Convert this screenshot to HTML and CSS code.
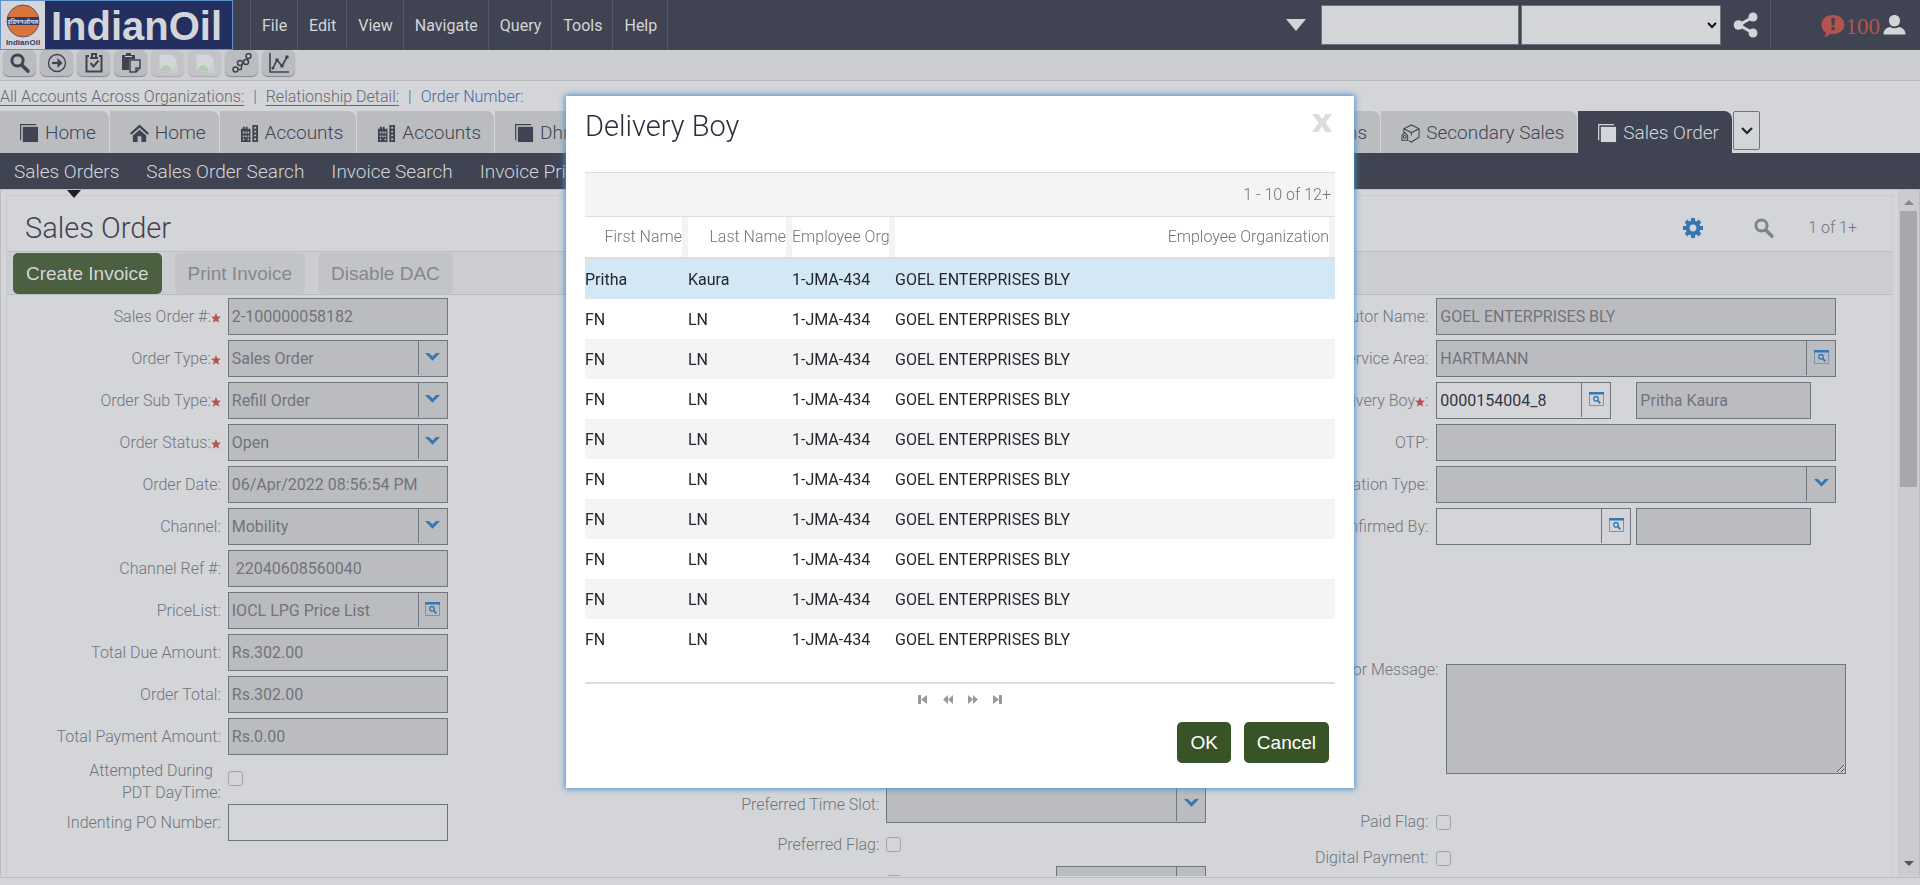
FILE: index.html
```html
<!DOCTYPE html>
<html lang="en">
<head>
<meta charset="utf-8">
<title>Sales Order</title>
<link rel="stylesheet" href="styles.css">
</head>
<body>
<svg class="sprite" aria-hidden="true">
  <symbol id="i-star" viewBox="0 0 10 10"><path fill="#b5534c" d="M5 0l1.400 3.400 3.600.3-2.800 2.400.9 3.700L5 7.800 1.900 9.800l.9-3.700L0 3.700l3.600-.3z"/></symbol>
  <symbol id="i-chev" viewBox="0 0 15 9"><path fill="#3577b3" d="M0 1h4l3.500 3.400L11 1h4L7.500 8.800z"/></symbol>
  <symbol id="i-pick" viewBox="0 0 15 14"><path fill="none" stroke="#6f96c2" d="M.5 1v12.500h14V1"/><path fill="#3577b3" d="M0 0h15v2.500H0z"/><circle cx="7" cy="6.800" r="2.300" fill="none" stroke="#3577b3" stroke-width="1.300"/><path stroke="#3577b3" stroke-width="1.800" d="M8.700 8.600l2.600 2.800"/></symbol>
  <symbol id="i-search" viewBox="0 0 20 20"><circle cx="7.500" cy="7.500" r="5.600" fill="none" stroke="currentColor" stroke-width="3"/><path stroke="currentColor" stroke-width="3.600" stroke-linecap="round" d="M12 12.200l5.800 5.900"/></symbol>
  <symbol id="i-stack" viewBox="0 0 20 20"><path fill="currentColor" d="M3 3h16v16H3z"/><path fill="none" stroke="currentColor" stroke-width="1.300" d="M.7 17V.7H17"/></symbol>
  <symbol id="i-home" viewBox="0 0 20 20"><path fill="currentColor" d="M10 6l7 6v7h-5v-6H8v6H3v-7z"/><path fill="none" stroke="currentColor" stroke-width="2.400" d="M.8 10.500L10 2.200l9.200 8.300"/></symbol>
  <symbol id="i-build" viewBox="0 0 20 20"><path fill="currentColor" fill-rule="evenodd" d="M1 5h2V3h2v2h1V3h2v2h3v14H1zM3 8v2h1.500V8zm2.500 0v2H7V8zM8 8v2h1.500V8zM3 12v2h1.500v-2zm2.500 0v2H7v-2zM8 12v2h1.500v-2zM3 15.500v1.500h1.500v-1.500zm5 0v1.500h1.500v-1.500zM13 1h6v18h-6zm2 2v2h2V3zm0 4v2h2V7zm0 4v2h2v-2zm0 4v2h2v-2z"/></symbol>
</svg>

<header class="top">
  <div class="logo">
    <svg class="logo-mark" viewBox="0 0 44 48" aria-hidden="true">
      <circle cx="22" cy="20" r="16" fill="#d9743a" stroke="#5e5470"/>
      <path fill="#2f3c6c" d="M6 16h32v8H6z"/>
      <text x="22" y="22.500" text-anchor="middle" class="mark-band">इंडियनऑयल</text>
      <text x="22" y="44" text-anchor="middle" class="mark-name">IndianOil</text>
    </svg>
    <span class="logo-word">IndianOil</span>
  </div>
  <nav class="menu">
    <a href="#">File</a><a href="#">Edit</a><a href="#">View</a><a href="#">Navigate</a><a href="#">Query</a><a href="#">Tools</a><a href="#">Help</a>
  </nav>
  <div class="top-right">
    <span class="caret"></span>
    <input class="find" aria-label="Search text">
    <select class="find find-type" aria-label="Search in"><option></option></select>
    <span class="share"><svg width="26" height="26" viewBox="0 0 26 26"><g fill="#d4d5d9"><circle cx="5.500" cy="13" r="4.800"/><circle cx="20" cy="5" r="4.500"/><circle cx="20" cy="21" r="4.500"/></g><path d="M20 5L6 13l14 8" fill="none" stroke="#d4d5d9" stroke-width="3"/></svg></span>
    <svg class="alert" width="24" height="23" viewBox="0 0 24 23"><path fill="#b5534c" d="M12 0c6.500 0 11.500 4.200 11.500 9.600S18.500 19 12 19c-1 0-2 0-3 0-1.800 1.700-3.600 2.600-6 3.300 1-1.300 1.600-2.600 1.800-4.600C2 16 .5 13 .5 9.600.5 4.200 5.500 0 12 0z"/><path fill="#404452" d="M10.200 3h3.800l-.7 7.600h-2.400zM10.500 12h3.200v3.200h-3.200z"/></svg><span class="count">100</span>
    <svg class="user" width="23" height="20" viewBox="0 0 23 20"><path fill="#d4d5d9" d="M11.500 0c3.400 0 5.500 2.400 5.500 5.500S15 11.500 11.500 11.500 6 8.600 6 5.500 8.100 0 11.500 0zM.5 19.500c0-4.500 3-7 6.500-7.500 3 1.600 6 1.600 9 0 3.500.5 6.500 3 6.500 7.500z"/></svg>
  </div>
</header>

<div class="toolbar">
  <button aria-label="Search"><svg viewBox="0 0 20 20"><use href="#i-search"/></svg></button>
  <button aria-label="Go"><svg viewBox="0 0 20 20" fill="none" stroke="currentColor"><circle cx="10" cy="10" r="8.500" stroke-width="1.400"/><path stroke-width="2.200" d="M5 10h8"/><path fill="currentColor" stroke="none" d="M10.500 5l5 5-5 5z"/></svg></button>
  <button aria-label="Tasks"><svg viewBox="0 0 20 20" fill="none" stroke="currentColor" stroke-width="2"><path d="M5 3H2.500v15.500h15V3H15M6 5h8M8 4V1h4v3M6.500 10l3 3.500 5-6"/></svg></button>
  <button aria-label="Paste"><svg viewBox="0 0 20 20"><path fill="currentColor" d="M1 2h4V0h5v2h4v4H8v11H1z"/><path fill="#cdced2" d="M4 3h7v1H4z"/><path fill="#bbbcc0" stroke="currentColor" stroke-width="1.500" d="M9 7h10v8l-4 4H9zM15 19v-4h4"/></svg></button>
  <button class="off" aria-label="Image 1"><svg viewBox="0 0 20 20"><path fill="#d8dce3" stroke="#b4b7be" d="M1 1h13l5 5v13H1z"/><path fill="#9fc79a" d="M2 18c2-5 5-7 9-5l3 5z"/><path fill="#cdced2" d="M12 19l8-8v9h-8z"/></svg></button>
  <button class="off" aria-label="Image 2"><svg viewBox="0 0 20 20"><path fill="#d8dce3" stroke="#b4b7be" d="M1 1h13l5 5v13H1z"/><path fill="#9fc79a" d="M2 18c2-5 5-7 9-5l3 5z"/><path fill="#cdced2" d="M12 19l8-8v9h-8z"/></svg></button>
  <button aria-label="Flow"><svg viewBox="0 0 20 20" fill="none" stroke="currentColor" stroke-width="1.500"><circle cx="3.500" cy="16.500" r="2.500"/><circle cx="8" cy="10" r="2.500"/><circle cx="14" cy="9" r="2.500"/><circle cx="16.500" cy="3" r="2.500"/><path d="M6 16.500h3l1-4M15.500 6.500l.5-1"/></svg></button>
  <button aria-label="Chart"><svg viewBox="0 0 20 20" fill="none" stroke="currentColor" stroke-width="1.600"><path d="M1 0v19h19M4 15l4-8 5 6 5-9"/><g fill="currentColor" stroke="none"><circle cx="4" cy="15" r="1.600"/><circle cx="8" cy="7" r="1.800"/><circle cx="13" cy="13" r="1.800"/><circle cx="18" cy="4" r="1.800"/></g></svg></button>
</div>

<div class="crumbs"><a href="#">All Accounts Across Organizations:</a><i>|</i><a href="#">Relationship Detail:</a><i>|</i><span>Order Number:</span></div>

<div class="tabs">
  <a href="#" class="tab"><svg><use href="#i-stack"/></svg>Home</a>
  <a href="#" class="tab"><svg><use href="#i-home"/></svg>Home</a>
  <a href="#" class="tab"><svg><use href="#i-build"/></svg>Accounts</a>
  <a href="#" class="tab"><svg><use href="#i-build"/></svg>Accounts</a>
  <a href="#" class="tab"><svg><use href="#i-stack"/></svg>Dhruva</a>
  <a href="#" class="tab tab-wide">Organizations</a>
  <a href="#" class="tab"><svg viewBox="0 0 20 20" fill="none" stroke="currentColor" stroke-width="1.100"><path d="M3 10V5l8-4 8 4v9l-8 5-3-1.500M3 5l8 4 8-4M11 9v3"/><path d="M4 9l-3 3v5h6v-5z"/><circle cx="4" cy="13.500" r="1.500"/></svg>Secondary Sales</a>
  <a href="#" class="tab tab-on"><svg><use href="#i-stack"/></svg>Sales Order</a>
  <button class="tab-more" aria-label="More tabs"><svg width="12" height="8" viewBox="0 0 12 8"><path fill="none" stroke="#22242c" stroke-width="2.200" d="M1 1l5 5 5-5"/></svg></button>
</div>
<nav class="views"><a href="#" class="current">Sales Orders</a><a href="#">Sales Order Search</a><a href="#">Invoice Search</a><a href="#">Invoice Print</a></nav>

<main class="frame">
  <section class="card">
    <div class="card-head">
      <h1>Sales Order</h1>
      <svg class="gear" width="20" height="20" viewBox="0 0 20 20"><circle cx="10" cy="10" r="5.400" fill="none" stroke="#3577b3" stroke-width="4"/><path stroke="#3577b3" stroke-width="4" d="M10 0v4M10 16v4M0 10h4M16 10h4M3 3l2.800 2.800M14.200 14.200L17 17M17 3l-2.800 2.800M5.800 14.200L3 17"/></svg>
      <svg class="query" width="20" height="20"><use href="#i-search"/></svg>
      <span class="count-text">1 of 1+</span>
    </div>
    <div class="actions">
      <button class="btn">Create Invoice</button><button class="btn btn-off" disabled>Print Invoice</button><button class="btn btn-off" disabled>Disable DAC</button>
    </div>
    <div class="form">
      <div class="col col-a">
        <div class="row"><label for="f1">Sales Order #:<svg class="star"><use href="#i-star"/></svg></label><div class="box"><input id="f1" value="2-100000058182" readonly></div></div>
        <div class="row"><label for="f2">Order Type:<svg class="star"><use href="#i-star"/></svg></label><div class="box"><select id="f2"><option>Sales Order</option></select><span class="side"><svg class="chev"><use href="#i-chev"/></svg></span></div></div>
        <div class="row"><label for="f3">Order Sub Type:<svg class="star"><use href="#i-star"/></svg></label><div class="box"><select id="f3"><option>Refill Order</option></select><span class="side"><svg class="chev"><use href="#i-chev"/></svg></span></div></div>
        <div class="row"><label for="f4">Order Status:<svg class="star"><use href="#i-star"/></svg></label><div class="box"><select id="f4"><option>Open</option></select><span class="side"><svg class="chev"><use href="#i-chev"/></svg></span></div></div>
        <div class="row"><label for="f5">Order Date:</label><div class="box"><input id="f5" value="06/Apr/2022 08:56:54 PM" readonly></div></div>
        <div class="row"><label for="f6">Channel:</label><div class="box"><select id="f6"><option>Mobility</option></select><span class="side"><svg class="chev"><use href="#i-chev"/></svg></span></div></div>
        <div class="row"><label for="f7">Channel Ref #:</label><div class="box"><input id="f7" value=" 22040608560040" readonly></div></div>
        <div class="row"><label for="f8">PriceList:</label><div class="box"><input id="f8" value="IOCL LPG Price List" readonly><button class="side" aria-label="Pick price list"><svg class="pick"><use href="#i-pick"/></svg></button></div></div>
        <div class="row"><label for="f9">Total Due Amount:</label><div class="box"><input id="f9" value="Rs.302.00" readonly></div></div>
        <div class="row"><label for="f10">Order Total:</label><div class="box"><input id="f10" value="Rs.302.00" readonly></div></div>
        <div class="row"><label for="f11">Total Payment Amount:</label><div class="box"><input id="f11" value="Rs.0.00" readonly></div></div>
        <div class="row row-two"><label for="f12">Attempted During&nbsp;&nbsp;<br>PDT DayTime:</label><div class="slot"><input type="checkbox" id="f12"></div></div>
        <div class="row"><label for="f13">Indenting PO Number:</label><div class="box open"><input id="f13"></div></div>
      </div>
      <div class="col col-b">
        <div class="row"><label for="g1">Preferred Time Slot:</label><div class="box"><select id="g1"><option></option></select><span class="side"><svg class="chev"><use href="#i-chev"/></svg></span></div></div>
        <div class="row"><label for="g2">Preferred Flag:</label><div class="slot"><input type="checkbox" id="g2"></div></div>
        <div class="row"><span class="label"></span><div class="slot slot-pair"><input type="checkbox" aria-label="Schedule"><div class="box"><select aria-label="Schedule type"><option></option></select><span class="side"><svg class="chev"><use href="#i-chev"/></svg></span></div></div></div>
      </div>
      <div class="col col-c">
        <div class="row"><label for="h1">Distributor Name:</label><div class="box"><input id="h1" value="GOEL ENTERPRISES BLY" readonly></div></div>
        <div class="row"><label for="h2">Service Area:</label><div class="box"><input id="h2" value="HARTMANN" readonly><button class="side" aria-label="Pick service area"><svg class="pick"><use href="#i-pick"/></svg></button></div></div>
        <div class="row"><label for="h3">Delivery Boy<svg class="star"><use href="#i-star"/></svg>:</label><div class="slot pair pair-gap"><div class="box open"><input id="h3" value="0000154004_8"><button class="side" aria-label="Pick delivery boy"><svg class="pick"><use href="#i-pick"/></svg></button></div><div class="box name"><input aria-label="Delivery boy name" value="Pritha Kaura" readonly></div></div></div>
        <div class="row"><label for="h4">OTP:</label><div class="box"><input id="h4" readonly></div></div>
        <div class="row"><label for="h5">Cancellation Type:</label><div class="box"><select id="h5"><option></option></select><span class="side"><svg class="chev"><use href="#i-chev"/></svg></span></div></div>
        <div class="row"><label for="h6">Confirmed By:</label><div class="slot pair"><div class="box open"><input id="h6"><button class="side" aria-label="Pick confirmed by"><svg class="pick"><use href="#i-pick"/></svg></button></div><div class="box name"><input aria-label="Confirmed by name" readonly></div></div></div>
        <div class="row row-msg"><label for="h7">Error Message:</label><textarea id="h7" readonly></textarea></div>
        <div class="row"><label for="h8">Paid Flag:</label><div class="slot"><input type="checkbox" id="h8"></div></div>
        <div class="row"><label for="h9">Digital Payment:</label><div class="slot"><input type="checkbox" id="h9"></div></div>
      </div>
    </div>
  </section>
  <div class="scroll"><span class="up"></span><span class="thumb"></span><span class="down"></span></div>
</main>

<div class="overlay">
  <div class="dialog" role="dialog" aria-labelledby="dlg">
    <div class="dlg-head"><h2 id="dlg">Delivery Boy</h2><button class="close" aria-label="Close"><svg width="20" height="18" viewBox="0 0 20 18"><path fill="#dcdcdc" d="M0 0h6.500L10 5.500 13.500 0H20l-6.500 8.700L20 18h-6.500L10 12l-3.500 6H0l6.500-9.300z"/></svg></button></div>
    <div class="band">1 - 10 of 12+</div>
    <table>
      <colgroup><col class="c1"><col class="c2"><col class="c3"><col></colgroup>
      <thead><tr><th><div>First Name</div></th><th><div>Last Name</div></th><th><div class="cut">Employee Organization Id</div></th><th><div>Employee Organization</div></th></tr></thead>
      <tbody>
        <tr class="sel"><td>Pritha</td><td>Kaura</td><td>1-JMA-434</td><td>GOEL ENTERPRISES BLY</td></tr>
        <tr><td>FN</td><td>LN</td><td>1-JMA-434</td><td>GOEL ENTERPRISES BLY</td></tr>
        <tr><td>FN</td><td>LN</td><td>1-JMA-434</td><td>GOEL ENTERPRISES BLY</td></tr>
        <tr><td>FN</td><td>LN</td><td>1-JMA-434</td><td>GOEL ENTERPRISES BLY</td></tr>
        <tr><td>FN</td><td>LN</td><td>1-JMA-434</td><td>GOEL ENTERPRISES BLY</td></tr>
        <tr><td>FN</td><td>LN</td><td>1-JMA-434</td><td>GOEL ENTERPRISES BLY</td></tr>
        <tr><td>FN</td><td>LN</td><td>1-JMA-434</td><td>GOEL ENTERPRISES BLY</td></tr>
        <tr><td>FN</td><td>LN</td><td>1-JMA-434</td><td>GOEL ENTERPRISES BLY</td></tr>
        <tr><td>FN</td><td>LN</td><td>1-JMA-434</td><td>GOEL ENTERPRISES BLY</td></tr>
        <tr><td>FN</td><td>LN</td><td>1-JMA-434</td><td>GOEL ENTERPRISES BLY</td></tr>
      </tbody>
    </table>
    <div class="pager">
      <button aria-label="First"><svg viewBox="0 0 10 9"><path d="M0 0h3v9H0zM9 0v9L3 4.500z"/></svg></button>
      <button aria-label="Previous"><svg viewBox="0 0 10 9"><path d="M5 0v9L0 4.500zM10 0v9L5 4.500z"/></svg></button>
      <button aria-label="Next"><svg viewBox="0 0 10 9"><path d="M0 0v9l5-4.500zM5 0v9l5-4.500z"/></svg></button>
      <button aria-label="Last"><svg viewBox="0 0 10 9"><path d="M6 0h3v9H6zM0 0v9l6-4.500z"/></svg></button>
    </div>
    <div class="dlg-foot"><button class="btn btn-go">OK</button><button class="btn btn-go">Cancel</button></div>
  </div>
</div>
</body>
</html>
```
FILE: styles.css
```css
* { box-sizing: border-box; }
body { margin: 0; height: 100vh; display: flex; flex-direction: column; overflow: hidden; background: #d4d5d9; font: 300 16px/22px Roboto, "Liberation Sans", sans-serif; color: #71747b; }
a { color: inherit; text-decoration: none; }
button { border: 0; padding: 0; background: none; font: inherit; color: inherit; }
h1, h2 { margin: 0; font-weight: 300; font-size: 29px; line-height: 36px; color: #404452; }
.sprite { display: none; }

.top { display: flex; flex: none; height: 50px; background: #404452; }
.logo { display: flex; width: 233px; margin-right: 17px; border: 1px solid #5f92c8; background: #222f60; }
.logo-mark { width: 44px; height: 48px; background: #d4d5d9; }
.mark-band { font: 700 6px "Noto Sans", sans-serif; fill: #d4d5d9; }
.mark-name { font: 700 8px "Liberation Sans", sans-serif; fill: #2f3c6c; }
.logo-word { flex: 1; padding-right: 4px; text-align: center; font: 700 40px/50px "Liberation Sans", sans-serif; color: #d4d5d9; }
.menu { display: flex; font-weight: 400; line-height: 52px; color: #d4d5d9; }
.menu a { height: 50px; padding: 0 10px 0 11px; border-left: 1px solid #53576a; }
.menu a:last-child { border-right: 1px solid #53576a; }
.top-right { display: flex; flex: 1; justify-content: flex-end; align-items: center; padding-right: 14px; }
.caret { border: 10px solid transparent; border-top: 12px solid #d4d5d9; border-bottom: 0; margin-right: 15px; }
.find { width: 198px; height: 40px; margin-right: 2px; border: 1px solid #71747b; background: #d4d5d9; border-radius: 0; }
.find-type { width: 200px; margin-right: 12px; }
.share { display: flex; align-items: center; height: 50px; width: 38px; border-right: 1px solid #53576a; margin-right: 50px; }
.alert { margin-top: 2px; }
.count { font: 23px/50px "Liberation Serif", serif; color: #b5534c; margin: 4px 3px 0 1px; }

.toolbar { display: flex; flex: none; gap: 4px; height: 31px; padding: 0 3px 4px; background: #cdced2; border-bottom: 1px solid #b8b9bc; }
.toolbar button { display: flex; justify-content: center; align-items: center; width: 33px; height: 26px; border-radius: 6px; background: #bbbcc0; box-shadow: 0 1px 1px #85878e; color: #404452; }
.toolbar svg { width: 20px; height: 20px; }
.toolbar .off { opacity: .5; }

.crumbs { flex: none; height: 30px; line-height: 31px; color: #66686f; }
.crumbs a { text-decoration: underline; text-underline-offset: 3px; }
.crumbs i { font-style: normal; color: #3d6ca8; padding: 0 9px; }
.crumbs span { color: #3d6ca8; }

.tabs { display: flex; flex: none; height: 42px; gap: 1px; margin-right: 160px; font-size: 19px; color: #404452; }
.tab { display: flex; align-items: center; gap: 6px; padding: 2px 13px 0 20px; background: #bbbcc0; border-radius: 0 8px 0 0; white-space: nowrap; }
.tab svg { width: 19px; height: 19px; flex: none; }
.tab-wide { flex: 1; justify-content: flex-end; }
.tab-on { background: #404452; color: #d4d5d9; }
.tab-more { display: flex; align-items: center; justify-content: center; width: 27px; height: 39px; border: 1px solid #71747b; border-radius: 2px; }
.views { display: flex; flex: none; gap: 27px; height: 36px; padding: 0 14px; background: #404452; color: #d4d5d9; font-size: 19px; line-height: 38px; }
.current { position: relative; }
.current::after { content: ""; position: absolute; top: 37px; left: 53px; border: 7px solid transparent; border-top: 8px solid #1d1f24; border-bottom: 0; }

.frame { display: flex; flex: 1; min-height: 0; margin-bottom: 7px; padding: 0 0 1px 5px; border: 1px solid #bcbdc1; overflow: hidden; }
.card { flex: 1; margin: 5px 5px 0 0; border: 1px solid #cbccd0; border-width: 1px 1px 0; overflow: hidden; }
.card-head { display: flex; align-items: center; height: 55px; padding: 8px 35px 0 18px; }
.card-head h1 { flex: 1; }
.card-head .query { color: #81838b; margin: 0 34px 0 51px; }
.actions { display: flex; gap: 13px; padding: 1px 6px 0; height: 44px; background: #cdced2; border: 1px solid #bcbdc1; border-width: 1px 0; }
.btn { height: 41px; padding: 0 13px; border-radius: 5px; background: #4a6040; color: #d4d5d9; font: 19px "Liberation Sans", Arial, sans-serif; }
.btn-off { background: #c3c4c8; color: #85878f; }

.form { display: grid; grid-template-columns: 441fr 759fr 686fr; padding-top: 3px; }
.row { display: flex; align-items: center; gap: 7px; min-height: 37px; margin-bottom: 5px; }
.row label, .label { flex: 1; text-align: right; white-space: nowrap; }
.star { width: 10px; height: 10px; vertical-align: -1px; }
.box { display: flex; width: 220px; height: 37px; border: 1px solid #71747f; background: #bbbcc0; }
.box input, .box select { flex: 1; min-width: 0; border: 0; padding: 0 3px; background: none; font: 400 16px Roboto, sans-serif; color: #71747b; appearance: none; white-space: pre; outline: 0; }
.open { background: #d4d5d9; }
.open input { color: #33363f; }
.box.open input { color: #33363f; }
.side { display: flex; justify-content: center; align-items: center; width: 29px; margin-bottom: 1px; padding-bottom: 3px; border-left: 1px solid #71747f; }
.chev { width: 15px; height: 9px; }
.pick { width: 15px; height: 14px; }
.slot { display: flex; align-items: center; }
input[type=checkbox] { appearance: none; width: 15px; height: 15px; margin: 0; border: 1px solid #a2a4a9; border-radius: 3px; background: transparent; }
.col-a .slot { width: 220px; }
.row-two { min-height: 44px; margin-bottom: 0; }
.row-two .slot { padding-bottom: 8px; }
.col-b { padding-top: 488px; }
.col-b .box, .col-b .slot { width: 320px; }
.col-b .slot-pair { justify-content: space-between; align-items: flex-start; }
.col-b .slot-pair input[type=checkbox] { margin-top: 9px; }
.col-b .slot-pair .box { width: 150px; }
.col-b .row:nth-child(2) { min-height: 33px; }
.col-c label { flex: 0 0 222px; }
.col-c .row { gap: 8px; }
.col-c .box, .col-c .slot { width: 400px; }
.col-c .pair { gap: 5px; }
.col-c .pair .box { width: 195px; }
.col-c .pair .name { width: 175px; }
.col-c .pair-gap { gap: 25px; }
.col-c .pair-gap .box { width: 175px; }
.col-c .row-msg { align-items: flex-start; margin: 114px 0 30px; }
.col-c .row-msg label { flex-basis: 232px; }
.row-msg textarea { width: 400px; height: 110px; margin: 5px 0 0; border: 1px solid #71747f; background: #bbbcc0; resize: both; }
.col-c .row-msg ~ .row { min-height: 36px; margin-bottom: 0; }

.scroll { display: flex; flex-direction: column; align-items: center; width: 21px; padding: 10px 2px; background: #cbccd0; }
.up { border: 5px solid transparent; border-bottom: 5px solid #85878c; border-top: 0; }
.thumb { width: 17px; height: 276px; margin: 6px 0 auto; background: #a7a8ac; }
.down { border: 5px solid transparent; border-top: 5px solid #53555c; border-bottom: 0; }

.overlay { position: fixed; inset: 0; display: flex; justify-content: center; align-items: flex-start; padding-top: 96px; }
.dialog { width: 788px; padding: 11px 19px 25px; background: #fff; box-shadow: 0 0 6px 1px #4790cc; }
.dlg-head { display: flex; align-items: flex-start; justify-content: space-between; height: 65px; padding-right: 3px; }
.dlg-head h2 { color: #2b2f3e; line-height: 38px; }
.close { display: flex; padding-top: 7px; }
.band { height: 45px; padding-right: 4px; border: 1px solid #ddd; border-width: 1px 0; background: #f4f4f4; line-height: 43px; text-align: right; }
table { width: 100%; table-layout: fixed; border-collapse: separate; border-spacing: 0; font-weight: 400; color: #23252f; }
.c1, .c3 { width: 103px; }
.c2 { width: 104px; }
th { height: 42px; padding: 0; border-bottom: 2px solid #ddd; font-weight: 300; color: #71747b; }
th div { height: 40px; border-right: 6px solid #f4f4f4; line-height: 40px; text-align: right; white-space: nowrap; overflow: hidden; }
th .cut { text-align: left; }
td { height: 40px; padding: 1px 0 0; }
tbody tr:nth-child(odd) { background: #f4f4f4; }
tbody .sel:nth-child(odd) { background: #d3e8f4; }
.pager { display: flex; justify-content: center; gap: 15px; margin-top: 23px; height: 40px; padding-top: 11px; border-top: 2px solid #ddd; }
.pager button { display: flex; height: 9px; }
.pager svg { width: 10px; height: 9px; fill: #9a9a9a; }
.dlg-foot { display: flex; justify-content: flex-end; gap: 13px; padding-right: 6px; }
.btn-go { background: #385326; color: #fff; }
```
